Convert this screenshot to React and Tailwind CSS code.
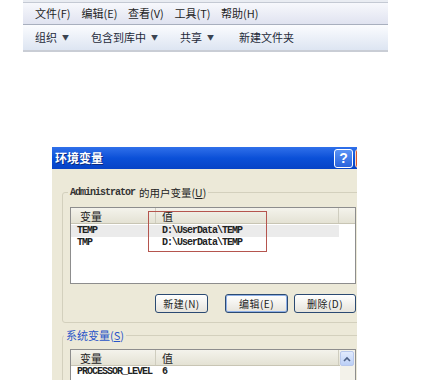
const cjk = { fontFamily: '"Noto Sans CJK SC", "Noto Sans", sans-serif' };
const mono = { fontFamily: '"Liberation Mono", "Noto Sans CJK SC", monospace' };

const menus = ['文件(F)', '编辑(E)', '查看(V)', '工具(T)', '帮助(H)'];

function Arrow() {
    return <span className="ml-[5px] inline-block text-[7px] leading-none text-[#3b4350]">▼</span>;
}

function Btn({ label, width, def }) {
    return (
        <div
            className={`flex h-[19px] items-center justify-center rounded-[3px] border border-[#2b4a72] bg-gradient-to-b from-[#ffffff] to-[#e6e4dc] text-[10px] tracking-[0.5px] text-[#222] ${def ? 'shadow-[inset_0_0_0_1px_#8fb0e6]' : ''} ${width}`}
        >
            {label}
        </div>
    );
}

function ListHeader() {
    return (
        <div className="flex h-[16px] border-b border-[#c8c5b4] bg-gradient-to-b from-[#f4f3ec] to-[#e4e2d4] text-[11px] leading-[16px] text-[#222]">
            <div className="w-[85px] border-r border-[#cfcdbf] pl-[9px]">变量</div>
            <div className="w-[183px] border-r border-[#cfcdbf] pl-[6px]">值</div>
        </div>
    );
}

export default function App() {
    return (
        <div className="flex h-[380px] w-[429px] flex-col overflow-hidden bg-white" style={cjk}>
            <div className="ml-[23px] w-[365px]">
                <div className="h-[3px] border-b border-[#c4c9d3] bg-[#e9ecf2]" />
                <div className="flex h-[21px] items-center bg-gradient-to-b from-[#f7f8fc] to-[#e0e3f0] pl-[12px] text-[11px] text-[#1e1e1e]">
                    {menus.map((m) => (
                        <div key={m} className="w-[46.5px]">{m}</div>
                    ))}
                </div>
                <div className="h-px bg-[#a8afbe]" />
                <div className="flex h-[25px] items-center bg-gradient-to-b from-[#fbfcfe] to-[#dde5f2] pl-[12px] text-[11px] text-[#1e2a3a]">
                    <div className="flex w-[56px] items-center">组织<Arrow /></div>
                    <div className="flex w-[89px] items-center">包含到库中<Arrow /></div>
                    <div className="flex w-[59px] items-center">共享<Arrow /></div>
                    <div>新建文件夹</div>
                </div>
                <div className="h-[2px] bg-[#c9cdd5]" />
            </div>

            <div className="ml-[52px] mt-[95px] w-[305px] flex-1 overflow-hidden bg-[#ece9d8]">
                <div className="w-[330px]">
                    <div className="flex h-[22px] items-center bg-gradient-to-b from-[#2f70ea] via-[#0b50d8] to-[#0743c6] pl-[3px]">
                        <span className="text-[12px] font-bold text-white [text-shadow:1px_1px_0_#0a2a80]">环境变量</span>
                        <div className="ml-auto mr-[8px] flex items-center gap-[2px]">
                            <div className="flex h-[19px] w-[19px] items-center justify-center rounded-[3px] border border-white bg-gradient-to-b from-[#5a93f5] to-[#2a62dc] text-[14px] font-bold leading-none text-white" style={{ fontFamily: '"Liberation Sans", sans-serif' }}>?</div>
                            <div className="h-[19px] w-[19px] rounded-[3px] border border-[#f0d8c8] bg-[#d9582e]" />
                        </div>
                    </div>

                    <div className="px-[10px] pt-[23px]">
                        <div className="relative h-[131px] w-[305px] rounded-[3px] border border-[#d3d0bd] pl-[7px] pt-[14px]">
                            <div className="absolute -top-[8px] left-[5px] flex items-center bg-[#ece9d8] px-[2px] text-[10.5px] text-[#222]">
                                <span className="mr-[4px] text-[10px] font-bold tracking-[-1px] text-[#333]" style={mono}>Administrator</span>
                                的用户变量(<span className="underline">U</span>)
                            </div>
                            <div className="relative h-[77px] w-[286px] border border-[#8d8d8d] bg-white">
                                <ListHeader />
                                <div className="mt-[1px] text-[10px] font-bold leading-[12px] tracking-[-1px] text-[#222]" style={mono}>
                                    <div className="flex w-[268px] bg-[#ebebeb]">
                                        <div className="w-[85px] pl-[6px]">TEMP</div>
                                        <div className="pl-[6px]">D:\UserData\TEMP</div>
                                    </div>
                                    <div className="flex">
                                        <div className="w-[85px] pl-[6px]">TMP</div>
                                        <div className="pl-[6px]">D:\UserData\TEMP</div>
                                    </div>
                                </div>
                                <div className="absolute left-[77px] top-[3px] h-[41px] w-[119px] border-[1.5px] border-[#b5554e]" />
                            </div>
                            <div className="mt-[10px] flex w-[286px]">
                                <div className="ml-[85px]"><Btn label="新建(N)" width="w-[53px]" /></div>
                                <div className="ml-[17px]"><Btn label="编辑(E)" width="w-[63px]" def /></div>
                                <div className="ml-[6px]"><Btn label="删除(D)" width="w-[62px]" /></div>
                            </div>
                        </div>

                        <div className="relative mt-[12px] h-[80px] w-[305px] rounded-[3px] border border-[#d3d0bd] pl-[7px] pt-[13px]">
                            <div className="absolute -top-[9px] left-[1px] bg-[#ece9d8] px-[2px] text-[11px] text-[#2a55c8]">
                                系统变量(<span className="underline">S</span>)
                            </div>
                            <div className="relative h-[60px] w-[286px] border border-[#8d8d8d] bg-white">
                                <ListHeader />
                                <div className="text-[10px] font-bold leading-[12px] tracking-[-1px] text-[#222]" style={mono}>
                                    <div className="flex">
                                        <div className="w-[85px] pl-[6px]">PROCESSOR_LEVEL</div>
                                        <div className="pl-[6px]">6</div>
                                    </div>
                                </div>
                                <div className="absolute right-0 top-0 h-full w-[15px] bg-[#f3f2ea]">
                                    <div className="mt-[1px] flex h-[15px] w-[14px] items-center justify-center rounded-[2px] border border-[#b8c8ec] bg-gradient-to-b from-[#e2ebfd] to-[#bcd0f6]">
                                        <svg width="8" height="6" viewBox="0 0 8 6">
                                            <path d="M1 5 L4 2 L7 5" fill="none" stroke="#4d6185" strokeWidth="1.6" />
                                        </svg>
                                    </div>
                                </div>
                            </div>
                        </div>
                    </div>
                </div>
            </div>
        </div>
    );
}
